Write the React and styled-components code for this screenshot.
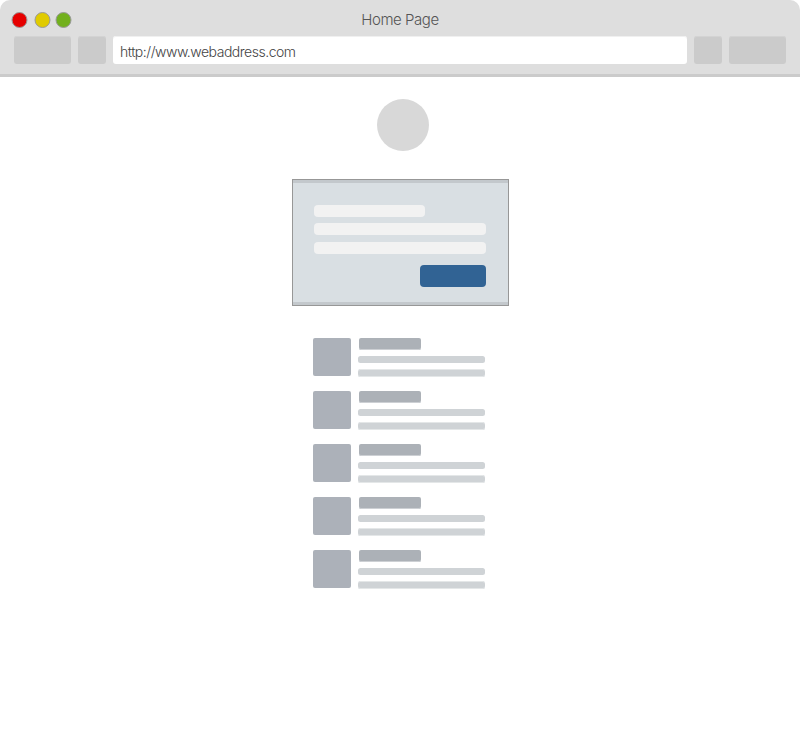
import React from "react";
import styled, { createGlobalStyle } from "styled-components";

const GlobalStyle = createGlobalStyle`
  * { box-sizing: border-box; }
  body { margin: 0; background: #fff; font-family: Inter, "Liberation Sans", sans-serif; }
`;

const Window = styled.div`
  width: 800px;
  height: 743px;
  background: #fff;
  overflow: hidden;
`;

const Chrome = styled.header`
  height: 77px;
  background: #dedede;
  border-bottom: 3px solid #cbcbcb;
  border-radius: 10px 10px 0 0;
`;

const TitleBar = styled.div`
  display: grid;
  grid-template-columns: 100px 1fr 100px;
  align-items: center;
  height: 36px;
  padding-top: 4px;
`;

const Lights = styled.svg`
  display: block;
  width: 80px;
  height: 20px;
  stroke: #999;
  stroke-width: 1;
`;

const Title = styled.h1`
  margin: 0;
  text-align: center;
  font-size: 15px;
  line-height: 20px;
  font-weight: 300;
  letter-spacing: -0.45px;
  color: #555;
`;

const Toolbar = styled.div`
  display: flex;
  gap: 7px;
  padding: 0 14px;
  height: 28px;
`;

const ToolButton = styled.span`
  flex: 0 0 ${(p) => (p.$wide ? 57 : 28)}px;
  border-radius: 3px;
  background: #cbcbcb;
  box-shadow: inset 0 1px #d3d3d3;
`;

const Address = styled.div`
  flex: 1;
  padding: 2px 7px 0;
  border-radius: 3px;
  background: #fff;
  box-shadow: inset 0 1px #f0f0f0;
  font-size: 14px;
  font-weight: 300;
  line-height: 27px;
  letter-spacing: -0.48px;
  color: #444;
`;

const Page = styled.main`
  display: flex;
  flex-direction: column;
  align-items: flex-start;
`;

const Avatar = styled.div`
  width: 52px;
  height: 52px;
  margin: 22px 0 0 377px;
  border-radius: 50%;
  background: #d8d8d8;
`;

const Card = styled.section`
  display: flex;
  flex-direction: column;
  width: 217px;
  height: 127px;
  margin: 28px 0 0 292px;
  padding: 25px 22px 0 21px;
  border: 1px solid #979797;
  background: #d9dfe3;
  box-shadow: inset 0 3px #c3c8cc, inset 0 -3px #c3c8cc;
`;

const Field = styled.div`
  width: ${(p) => p.$width}px;
  height: 12px;
  margin-bottom: ${(p) => p.$after}px;
  border-radius: 4px;
  background: #f2f2f2;
`;

const Submit = styled.div`
  align-self: flex-end;
  width: 66px;
  height: 22px;
  border-radius: 4px;
  background: #316394;
`;

const List = styled.div`
  display: grid;
  gap: 15px;
  margin: 32px 0 0 313px;
`;

const Item = styled.article`
  display: flex;
  align-items: flex-start;
  gap: 7px;
  height: 38px;
`;

const Thumb = styled.div`
  width: 38px;
  height: 38px;
  border-radius: 2px;
  background: #acb1b9;
`;

const Copy = styled.div`
  display: grid;
  gap: 6px;
`;

const Heading = styled.div`
  width: 62px;
  height: 12px;
  margin-left: 1px;
  border-radius: 2px;
  background: #acb1b7;
  box-shadow: inset 0 -1px #cdd0d4;
`;

const Line = styled.div`
  width: 127px;
  height: ${(p) => (p.$soft ? 8 : 7)}px;
  border-radius: 2.5px;
  background: #cfd3d6;
  box-shadow: ${(p) => (p.$soft ? "inset 0 1px #e4e7e8, inset 0 -1px #e4e7e8" : "none")};
`;

export default function App() {
  return (
    <Window>
      <GlobalStyle />
      <Chrome>
        <TitleBar>
          <Lights viewBox="0 0 80 20">
            <circle cx="19.5" cy="10" r="7.5" fill="#e60000" />
            <circle cx="42.5" cy="10" r="7.5" fill="#e0cb00" />
            <circle cx="63.5" cy="10" r="7.5" fill="#72b01d" />
          </Lights>
          <Title>Home Page</Title>
        </TitleBar>
        <Toolbar>
          <ToolButton $wide />
          <ToolButton />
          <Address>http://www.webaddress.com</Address>
          <ToolButton />
          <ToolButton $wide />
        </Toolbar>
      </Chrome>
      <Page>
        <Avatar />
        <Card>
          <Field $width={111} $after={6} />
          <Field $width={172} $after={7} />
          <Field $width={172} $after={11} />
          <Submit />
        </Card>
        <List>
          {[1, 2, 3, 4, 5].map((id) => (
            <Item key={id}>
              <Thumb />
              <Copy>
                <Heading />
                <Line />
                <Line $soft />
              </Copy>
            </Item>
          ))}
        </List>
      </Page>
    </Window>
  );
}
